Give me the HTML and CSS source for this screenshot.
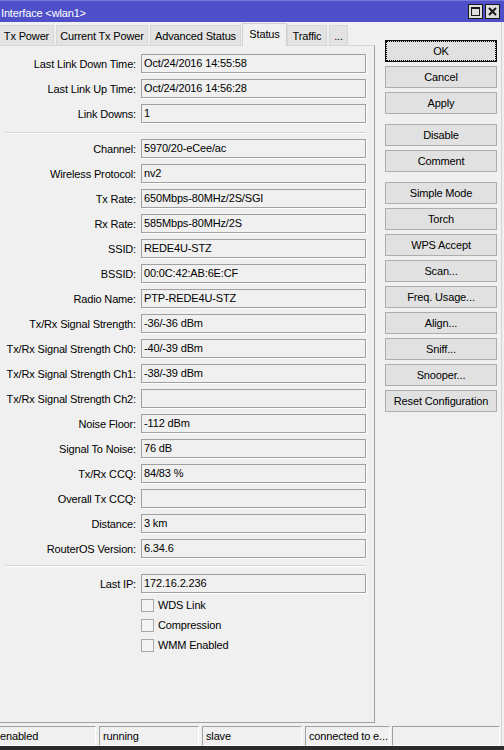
FILE: index.html
```html
<!DOCTYPE html>
<html>
<head>
<meta charset="utf-8">
<link rel="stylesheet" href="styles.css">
</head>
<body>
<div class="window">
  <div class="titlebar">
    <span class="title">Interface &lt;wlan1&gt;</span>
    <div class="controls">
      <span class="ctl"><svg width="13" height="13" viewBox="0 0 13 13"><rect x="2.5" y="2.5" width="8" height="8" fill="none" stroke="#1a1a1a" stroke-width="1"/><rect x="2" y="2" width="9" height="2" fill="#1a1a1a"/></svg></span>
      <span class="ctl"><svg width="13" height="13" viewBox="0 0 13 13"><path d="M3 3 L10 10 M10 3 L3 10" stroke="#1a1a1a" stroke-width="2" fill="none"/></svg></span>
    </div>
  </div>
  <div class="below">
    <div class="main">
      <div class="left">
        <div class="tabs">
          <div class="tab">Tx Power</div>
          <div class="tab">Current Tx Power</div>
          <div class="tab">Advanced Status</div>
          <div class="tab selected">Status</div>
          <div class="tab">Traffic</div>
          <div class="tab">...</div>
        </div>
        <div class="panel">
          <div class="row"><span class="label">Last Link Down Time:</span><span class="field">Oct/24/2016 14:55:58</span></div>
          <div class="row"><span class="label">Last Link Up Time:</span><span class="field">Oct/24/2016 14:56:28</span></div>
          <div class="row"><span class="label">Link Downs:</span><span class="field">1</span></div>
          <div class="sep sep-a"></div>
          <div class="row"><span class="label">Channel:</span><span class="field">5970/20-eCee/ac</span></div>
          <div class="row"><span class="label">Wireless Protocol:</span><span class="field">nv2</span></div>
          <div class="row"><span class="label">Tx Rate:</span><span class="field">650Mbps-80MHz/2S/SGI</span></div>
          <div class="row"><span class="label">Rx Rate:</span><span class="field">585Mbps-80MHz/2S</span></div>
          <div class="row"><span class="label">SSID:</span><span class="field">REDE4U-STZ</span></div>
          <div class="row"><span class="label">BSSID:</span><span class="field">00:0C:42:AB:6E:CF</span></div>
          <div class="row"><span class="label">Radio Name:</span><span class="field">PTP-REDE4U-STZ</span></div>
          <div class="row"><span class="label">Tx/Rx Signal Strength:</span><span class="field">-36/-36 dBm</span></div>
          <div class="row"><span class="label">Tx/Rx Signal Strength Ch0:</span><span class="field">-40/-39 dBm</span></div>
          <div class="row"><span class="label">Tx/Rx Signal Strength Ch1:</span><span class="field">-38/-39 dBm</span></div>
          <div class="row"><span class="label">Tx/Rx Signal Strength Ch2:</span><span class="field"></span></div>
          <div class="row"><span class="label">Noise Floor:</span><span class="field">-112 dBm</span></div>
          <div class="row"><span class="label">Signal To Noise:</span><span class="field">76 dB</span></div>
          <div class="row"><span class="label">Tx/Rx CCQ:</span><span class="field">84/83 %</span></div>
          <div class="row"><span class="label">Overall Tx CCQ:</span><span class="field"></span></div>
          <div class="row"><span class="label">Distance:</span><span class="field">3 km</span></div>
          <div class="row"><span class="label">RouterOS Version:</span><span class="field">6.34.6</span></div>
          <div class="sep sep-b"></div>
          <div class="row"><span class="label">Last IP:</span><span class="field">172.16.2.236</span></div>
          <div class="check first"><span class="box"></span><span>WDS Link</span></div>
          <div class="check"><span class="box"></span><span>Compression</span></div>
          <div class="check"><span class="box"></span><span>WMM Enabled</span></div>
        </div>
      </div>
      <div class="side">
        <div class="btn default">OK</div>
        <div class="btn">Cancel</div>
        <div class="btn">Apply</div>
        <div class="btn group">Disable</div>
        <div class="btn">Comment</div>
        <div class="btn group">Simple Mode</div>
        <div class="btn">Torch</div>
        <div class="btn">WPS Accept</div>
        <div class="btn">Scan...</div>
        <div class="btn">Freq. Usage...</div>
        <div class="btn">Align...</div>
        <div class="btn">Sniff...</div>
        <div class="btn">Snooper...</div>
        <div class="btn">Reset Configuration</div>
      </div>
    </div>
    <div class="statusbar">
      <div class="cell c1">enabled</div>
      <div class="cell c2">running</div>
      <div class="cell c3">slave</div>
      <div class="cell c4">connected to e...</div>
      <div class="cell c5"></div>
    </div>
  </div>
</div>
</body>
</html>
```

FILE: styles.css
```css
* { box-sizing: border-box; }
html, body {
  margin: 0;
  padding: 0;
}
body {
  width: 504px;
  height: 750px;
  overflow: hidden;
  background: #f0f0f0;
  font-family: "Liberation Sans", Arial, sans-serif;
  font-size: 11px;
  letter-spacing: -0.15px;
  color: #000;
}
.window {
  width: 504px;
  height: 750px;
  display: flex;
  flex-direction: column;
  border-bottom: 4px solid #2b2b2b;
}
.titlebar {
  height: 22px;
  flex: none;
  background: #4f50c9;
  border-top: 1px solid #7677d8;
  display: flex;
  align-items: center;
  justify-content: space-between;
  color: #fff;
}
.title {
  padding-left: 1px;
  padding-top: 2px;
  font-size: 11px;
}
.controls {
  display: flex;
  gap: 2px;
  margin-right: 4px;
}
.ctl {
  width: 15px;
  height: 15px;
  border: 1px solid #1a1a1a;
  background: #dcdcdc;
  display: flex;
}
.below {
  flex: 1;
  display: flex;
  flex-direction: column;
  margin-right: 2px;
  border-right: 1px solid #d4d4d4;
}
.main {
  height: 701px;
  display: flex;
  flex: none;
}
.left {
  width: 375px;
  display: flex;
  flex-direction: column;
}
.tabs {
  height: 23px;
  flex: none;
  display: flex;
  align-items: flex-end;
}
.tab {
  height: 20px;
  border: 1px solid #d6d6d6;
  border-bottom: none;
  background: #e3e3e3;
  text-align: center;
  line-height: 21px;
  white-space: nowrap;
}
.tab:nth-child(1) { width: 55px; margin-left: -1px; }
.tab:nth-child(2) { width: 92px; margin-left: 2px; }
.tab:nth-child(3) { width: 91px; margin-left: 2px; }
.tab:nth-child(4) { width: 45px; margin-left: 1px; }
.tab:nth-child(5) { width: 40px; margin-left: 0; }
.tab:nth-child(6) { width: 19px; margin-left: 2px; }
.tab.selected {
  height: 23px;
  margin-bottom: -1px;
  background: #f0f0f0;
  border-color: #d0d0d0;
  line-height: 21px;
  position: relative;
  z-index: 1;
}
.panel {
  flex: 1;
  border-top: 1px solid #d6d6d6;
  border-right: 1px solid #a0a0a0;
  border-bottom: 1px solid #a0a0a0;
  padding-top: 5px;
}
.row {
  height: 25px;
  display: flex;
  align-items: center;
}
.label {
  width: 136px;
  text-align: right;
  white-space: nowrap;
  flex: none;
}
.field {
  margin-left: 5px;
  width: 225px;
  height: 19px;
  border: 1px solid #a0a0a0;
  box-shadow: 1px 1px 0 #fff;
  background: #f0f0f0;
  padding-left: 2px;
  line-height: 17px;
  white-space: nowrap;
}
.sep {
  margin-left: 5px;
  width: 361px;
  border-top: 1px solid #d5d5d5;
  border-bottom: 1px solid #fff;
}
.sep-a { margin-top: 6px; margin-bottom: 2px; }
.sep-b { margin-top: 4px; margin-bottom: 4px; }
.check {
  height: 20px;
  display: flex;
  align-items: center;
  padding-left: 141px;
  gap: 4px;
}
.check.first { margin-top: -1px; }
.box {
  width: 13px;
  height: 13px;
  border: 1px solid #a8a8a8;
  background: #f4f4f4;
}
.side {
  padding-left: 10px;
  padding-top: 18px;
  display: flex;
  flex-direction: column;
}
.btn {
  width: 112px;
  height: 22px;
  margin-bottom: 4px;
  border: 1px solid #adadad;
  background: #e1e1e1;
  text-align: center;
  line-height: 20px;
  white-space: nowrap;
}
.btn.group { margin-top: 6px; }
.btn.default {
  border-color: #111;
  outline: 1px dotted #000;
  outline-offset: -2px;
}
.statusbar {
  padding-top: 3px;
  display: flex;
  flex: none;
}
.cell {
  height: 20px;
  border: 1px solid;
  border-color: #a0a0a0 #fff #fff #a0a0a0;
  padding-left: 3px;
  line-height: 18px;
  white-space: nowrap;
  overflow: hidden;
}
.c1 { width: 100px; margin-left: -4px; }
.c2 { width: 100px; margin-left: 3px; }
.c3 { width: 100px; margin-left: 3px; }
.c4 { width: 85px; margin-left: 3px; }
.c5 { width: 108px; margin-left: 2px; }
```
